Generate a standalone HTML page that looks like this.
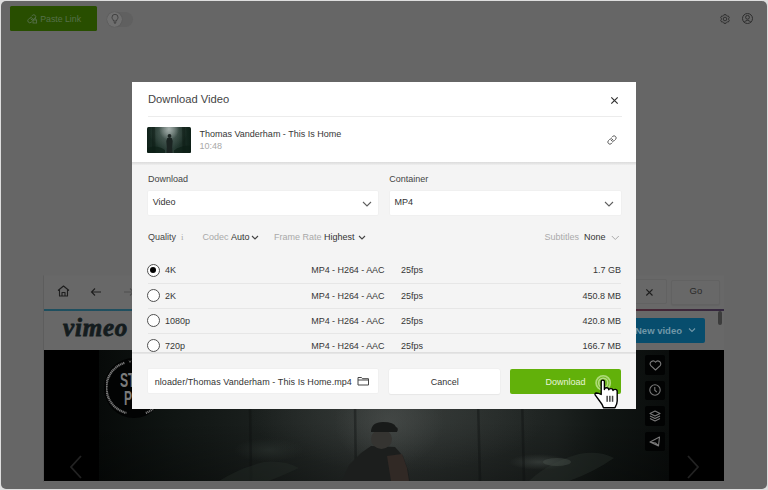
<!DOCTYPE html>
<html><head><meta charset="utf-8">
<style>
*{box-sizing:border-box;margin:0;padding:0}
html,body{width:768px;height:490px;overflow:hidden;background:#dedede;font-family:"Liberation Sans",sans-serif}
.a{position:absolute}
#win{position:absolute;left:1px;top:1px;width:766px;height:488px;border-radius:5px;background:#666;overflow:hidden}
/* top bar */
#paste{left:8.5px;top:5px;width:87.5px;height:25px;background:#284e00;border-radius:1.5px}
#paste span{position:absolute;left:30.7px;top:7.7px;font-size:8.75px;color:#56704a;white-space:nowrap}
#tog{left:106px;top:10.5px;width:25.5px;height:15px;border-radius:8px;background:#606060}
#knob{left:106px;top:10.5px;width:15px;height:15px;border-radius:50%;background:#6f6f6f;box-shadow:0 0 1px rgba(0,0,0,.3)}
/* browser panel */
#br{left:42px;top:273.5px;width:681px;height:207px;background:#686868;border-left:1px solid #5d5d5d;border-top:1px solid #676767}
#gline{left:43px;top:308.2px;width:680px;height:2.1px;background:linear-gradient(90deg,#1e4f5f 0%,#245060 40%,#482634 88%,#33283f 100%)}
#video{left:43px;top:349px;width:680px;height:131px;background:#000;overflow:hidden}
#photo{left:55px;top:0;width:570px;height:131px;background:
 radial-gradient(ellipse 55px 45px at 290px 72px,rgba(78,82,80,.55),rgba(0,0,0,0) 100%),
 radial-gradient(ellipse 150px 60px at 300px 62px,rgba(60,64,62,.6),rgba(0,0,0,0) 100%),
 radial-gradient(ellipse 30px 8px at 440px 112px,rgba(80,88,84,.45),rgba(0,0,0,0) 100%),
 radial-gradient(ellipse 35px 12px at 170px 100px,rgba(50,58,54,.45),rgba(0,0,0,0) 100%),
 linear-gradient(180deg,rgba(0,0,0,0) 55%,rgba(0,0,0,.3) 100%),
 linear-gradient(90deg,#070a09 0%,#0f1412 12%,#1a1f1d 28%,#262b29 42%,#2e3331 52%,#272c2a 65%,#1d2220 80%,#111614 88%,#0a0d0c 100%)}
#newvid{left:590px;top:317px;width:113.5px;height:24.5px;background:#074d6d;border-radius:2px}
#newvid span{position:absolute;left:44px;top:7px;font-size:9.5px;font-weight:bold;color:#7097a8;white-space:nowrap}
.ib{width:19.5px;height:19.5px;background:#020303;border-radius:2px}
/* dialog */
#dlg{left:131px;top:81px;width:504px;height:327px;background:#f4f4f4;overflow:hidden}
#hdr{left:0;top:0;width:504px;height:81px;background:#fff}
#hsep{left:0;top:79.5px;width:504px;height:3px;background:linear-gradient(#dcdcdc,#e4e4e4 50%,#efefef)}
.t{position:absolute;white-space:nowrap;font-size:9px;color:#363636;line-height:1}
.lbl{color:#444}
.sel{position:absolute;background:#fff;height:24px;border-radius:1px;box-shadow:0 0 0 .5px #ececec}
.row{position:absolute;left:15.5px;width:473px;height:25.2px}
.rsep{position:absolute;left:16px;width:473px;height:1px;background:#e6e6e6}
.rad{position:absolute;left:16px;width:13px;height:13px;border:1.1px solid #505050;border-radius:50%;background:#fff}
.rad.on::after{content:"";position:absolute;left:2.35px;top:2.35px;width:6.1px;height:6.1px;border-radius:50%;background:#000}
#listsh{left:0;top:269.8px;width:504px;height:2.2px;background:linear-gradient(#dcdcdc,#e8e8e8)}
.btn{position:absolute;height:25px;border-radius:2px}
</style></head><body>
<div id="win">
  <div id="paste" class="a">
    <svg class="a" style="left:17px;top:8px" width="11" height="10" viewBox="0 0 11 10"><g transform="translate(0,0) scale(0.4)"><path d="M10 13a5 5 0 0 0 7.54.54l3-3a5 5 0 0 0-7.07-7.07l-1.72 1.71" fill="none" stroke="#56704a" stroke-width="2.4" stroke-linecap="round"/><path d="M14 11a5 5 0 0 0-7.54-.54l-3 3a5 5 0 0 0 7.07 7.07l1.71-1.71" fill="none" stroke="#56704a" stroke-width="2.4" stroke-linecap="round"/></g><rect x="6" y="6" width="3.6" height="3" fill="none" stroke="#56704a" stroke-width="0.9"/><path d="M6.8 6 V5.2 A1 1 0 0 1 8.8 5.2 V6" fill="none" stroke="#56704a" stroke-width="0.8"/></svg>
    <span>Paste Link</span>
  </div>
  <div id="tog" class="a"></div>
  <div id="knob" class="a">
    <svg class="a" style="left:3.5px;top:2.5px" width="8" height="10" viewBox="0 0 8 10"><path d="M2.5 7 C2.5 5.6 1 5 1 3.3 A3 3 0 0 1 7 3.3 C7 5 5.5 5.6 5.5 7 Z" fill="none" stroke="#3c3c3c" stroke-width="0.9"/><path d="M2.7 8.3 H5.3 M3.2 9.3 H4.8" stroke="#3c3c3c" stroke-width="0.8"/></svg>
  </div>
  <!-- gear -->
  <svg class="a" style="left:718.3px;top:12.4px" width="12" height="12" viewBox="0 0 12 12"><g transform="translate(6 6) scale(0.9) translate(-6 -6)"><path d="M4.05 2.62 L4.56 2.05 L4.88 1.13 L7.12 1.13 L7.44 2.05 L7.95 2.62 L8.70 2.78 L9.66 2.59 L10.78 4.54 L10.14 5.27 L9.90 6.00 L10.14 6.73 L10.78 7.46 L9.66 9.41 L8.70 9.22 L7.95 9.38 L7.44 9.95 L7.12 10.87 L4.88 10.87 L4.56 9.95 L4.05 9.38 L3.30 9.22 L2.34 9.41 L1.22 7.46 L1.86 6.73 L2.10 6.00 L1.86 5.27 L1.22 4.54 L2.34 2.59 L3.30 2.78 Z" fill="none" stroke="#2e2e2e" stroke-width="1.05" stroke-linejoin="round"/><circle cx="6" cy="6" r="2" fill="none" stroke="#2e2e2e" stroke-width="1.05"/></g></svg>
  <!-- user -->
  <svg class="a" style="left:740px;top:11.4px" width="13" height="13" viewBox="0 0 13 13"><circle cx="6.5" cy="6.5" r="5" fill="none" stroke="#2e2e2e" stroke-width="1"/><circle cx="6.5" cy="5.3" r="1.9" fill="none" stroke="#2e2e2e" stroke-width="1"/><path d="M3.3 10.3 Q4.2 8.4 6.5 8.4 Q8.8 8.4 9.7 10.3" fill="none" stroke="#2e2e2e" stroke-width="1"/></svg>

  <!-- browser panel -->
  <div id="br" class="a"></div>
  <svg class="a" style="left:55.5px;top:284px" width="13" height="12" viewBox="0 0 13 12"><path d="M1 5.5 L6.5 1 L12 5.5 M2.5 4.5 V11 H10.5 V4.5 M5 11 V7.5 H8 V11" fill="none" stroke="#1e1e1e" stroke-width="1.1" stroke-linejoin="round"/></svg>
  <svg class="a" style="left:89px;top:285.5px" width="12" height="10" viewBox="0 0 12 10"><path d="M11 5 H1.5 M5 1.5 L1.5 5 L5 8.5" fill="none" stroke="#1e1e1e" stroke-width="1.1"/></svg>
  <svg class="a" style="left:122px;top:285.5px" width="12" height="10" viewBox="0 0 12 10"><path d="M1 5 H10.5 M7 1.5 L10.5 5 L7 8.5" fill="none" stroke="#4e4e4e" stroke-width="1.1"/></svg>
  <div class="a" style="left:560px;top:277.5px;width:106px;height:25px;border:1px solid #626262;border-radius:2px"></div>
  <svg class="a" style="left:644px;top:286.5px" width="9" height="9" viewBox="0 0 9 9"><path d="M1.3 1.3 L7.5 7.5 M7.5 1.3 L1.3 7.5" stroke="#1e1e1e" stroke-width="1.15"/></svg>
  <div class="a" style="left:670px;top:279px;width:49px;height:25px;border:1px solid #626262;border-radius:2px;box-shadow:0 1px 1px rgba(0,0,0,.05)"></div>
  <div class="t" style="left:688.5px;top:285.2px;font-size:9.5px;color:#2a2a2a">Go</div>
  <div id="gline" class="a"></div>
  <div class="a" style="left:717px;top:309.5px;width:4px;height:14.5px;border-radius:2px;background:#3c3c3c"></div>
  <div class="a" style="left:62px;top:314px;font-family:'Liberation Serif',serif;font-style:italic;font-weight:bold;font-size:25px;line-height:1;color:#141c1e;letter-spacing:0.8px;-webkit-text-stroke:0.8px #141c1e">vimeo</div>
  <div id="newvid" class="a"><span>New video</span>
    <svg class="a" style="left:97px;top:9px" width="8" height="6" viewBox="0 0 8 6"><path d="M1 1.5 L4 4.5 L7 1.5" fill="none" stroke="#7097a8" stroke-width="1.1"/></svg>
  </div>
  <div id="video" class="a">
    <div id="photo" class="a">
      <svg class="a" style="left:0;top:0" width="570" height="131" viewBox="0 0 570 131">
        <path d="M151 50 L152 131 M256 55 L257 131 M379 50 L381 131 M423 45 L425 131" stroke="rgba(12,16,14,.4)" stroke-width="2.5"/>
        <path d="M430 131 Q450 112 480 104 Q500 100 515 108 Q495 122 470 131 Z" fill="rgba(45,55,50,.35)"/>
        <ellipse cx="458" cy="112" rx="14" ry="4" fill="rgba(90,98,94,.3)"/>
        <path d="M120 131 Q140 118 165 112 Q185 110 200 118 Q185 125 170 131 Z" fill="rgba(40,48,44,.35)"/>
        <path d="M243 131 L250 115 L262 103 L272 96 L296 97 L304 106 L309 120 L311 131 Z" fill="#1c1e1d"/>
        <path d="M288 106 L303 104 L308 118 L310 131 L292 131 Z" fill="rgba(70,52,45,.5)"/>
        <ellipse cx="282.5" cy="89" rx="10.5" ry="10" fill="#353431"/>
        <path d="M272 82 Q272 72 284 72 Q295 72 297 77 Q300 78 298 82 Z" fill="#181a19"/>
      </svg>
    </div>
    <!-- badge -->
    <div class="a" style="left:59.5px;top:8px;width:60px;height:60px;border-radius:50%;background:#020303"></div>
    <svg class="a" style="left:62px;top:10px" width="60" height="60" viewBox="0 0 60 60"><path d="M18.3 2.9 A26 26 0 0 0 20.4 52.9" fill="none" stroke="#444" stroke-width="0.8"/><path d="M18.3 2.9 A26 26 0 0 0 20.4 52.9" fill="none" stroke="#7a7a7a" stroke-width="2.4" stroke-dasharray="1.1 0.7"/><path d="M39.8 52.9 A26 26 0 0 0 47 49" fill="none" stroke="#7a7a7a" stroke-width="2.4" stroke-dasharray="1.1 0.7"/><path d="M23 0.5 L24 2.5 L25 0.5" fill="none" stroke="#666" stroke-width="0.8"/></svg>
    <div class="a" style="left:75.5px;top:19.2px;font-size:21px;font-weight:bold;color:#7a7a7a;transform:scaleX(.58);transform-origin:0 0;line-height:1">ST</div>
    <div class="a" style="left:80px;top:37.5px;font-size:20px;font-weight:bold;color:#7a7a7a;transform:scaleX(.6);transform-origin:0 0;line-height:1">P</div>
    <svg class="a" style="left:25px;top:104px" width="14" height="26" viewBox="0 0 14 26"><path d="M12 2 L2 13 L12 24" fill="none" stroke="#222" stroke-width="1.8"/></svg>
    <svg class="a" style="left:642px;top:104px" width="14" height="26" viewBox="0 0 14 26"><path d="M2 2 L12 13 L2 24" fill="none" stroke="#222" stroke-width="1.8"/></svg>
    <div class="a ib" style="left:601px;top:5px"></div>
    <div class="a ib" style="left:601px;top:30.5px"></div>
    <div class="a ib" style="left:601px;top:56px"></div>
    <div class="a ib" style="left:601px;top:81.5px"></div>
    <svg class="a" style="left:604.5px;top:9.5px" width="13" height="11" viewBox="0 0 13 11"><path d="M6.5 10 L1.8 5.6 A2.6 2.6 0 0 1 6.5 2.2 A2.6 2.6 0 0 1 11.2 5.6 Z" fill="none" stroke="#7a7a7a" stroke-width="1.1" stroke-linejoin="round"/></svg>
    <svg class="a" style="left:605px;top:34px" width="12" height="12" viewBox="0 0 12 12"><circle cx="6" cy="6" r="5.2" fill="none" stroke="#7a7a7a" stroke-width="1.1"/><path d="M5.8 3 V6.2 L7.8 8.2" fill="none" stroke="#7a7a7a" stroke-width="1.1"/></svg>
    <svg class="a" style="left:605px;top:59.5px" width="12" height="12" viewBox="0 0 12 12"><path d="M6 1 L11 3.5 L6 6 L1 3.5 Z M1 6 L6 8.5 L11 6 M1 8.5 L6 11 L11 8.5" fill="none" stroke="#7a7a7a" stroke-width="1.1" stroke-linejoin="round"/></svg>
    <svg class="a" style="left:605px;top:85.5px" width="12" height="11" viewBox="0 0 12 11"><path d="M1 6 L10.5 1 L9.5 10 Z M1 6 L6.5 7 L9.5 10" fill="none" stroke="#7a7a7a" stroke-width="1.1" stroke-linejoin="round"/></svg>
  </div>

  <!-- dialog -->
  <div id="dlg" class="a">
    <div id="hdr" class="a"></div>
    <div class="t" style="left:16px;top:12px;font-size:11.2px;color:#444">Download Video</div>
    <svg class="a" style="left:478px;top:13.8px" width="9" height="9" viewBox="0 0 9 9"><path d="M1.3 1.3 L7.7 7.7 M7.7 1.3 L1.3 7.7" stroke="#333" stroke-width="1.2"/></svg>
    <div class="a" style="left:16px;top:33.5px;width:474px;height:1px;background:#ececec"></div>
    <div class="a" style="left:15px;top:45px;width:44px;height:25.5px;border-radius:1.5px;overflow:hidden;background:
 radial-gradient(ellipse 10px 11px at 22px 2px,rgba(180,190,187,.85),rgba(0,0,0,0) 100%),
 radial-gradient(ellipse 19px 17px at 21px 5px,rgba(105,120,115,.75),rgba(0,0,0,0) 100%),
 linear-gradient(90deg,#0f2119,#22372f 28%,#30433d 50%,#21352d 72%,#0d1f17)">
      <svg class="a" style="left:0;top:0" width="44" height="26" viewBox="0 0 44 26"><path d="M5 0 L8 0 L8.5 26 L5 26 Z M35 0 L38 0 L38.5 26 L35.5 26 Z" fill="rgba(10,25,18,.45)"/><path d="M19.5 26 L19.8 20 L19.3 14 L20.3 11 L24.7 11 L25.7 14 L25.2 20 L25.5 26 Z" fill="#1b2422"/><circle cx="22.5" cy="9" r="1.9" fill="#1b2422"/><path d="M0 21 Q10 17 18 23 L18 26 L0 26 Z M44 19 Q34 18 27 23.5 L27 26 L44 26 Z" fill="rgba(12,30,22,.7)"/></svg>
    </div>
    <div class="t" style="left:67.5px;top:48px">Thomas Vanderham - This Is Home</div>
    <div class="t" style="left:67.5px;top:60px;color:#a8a8a8">10:48</div>
    <svg class="a" style="left:474.7px;top:52.7px" width="10" height="10" viewBox="0 0 24 24"><path d="M10 13a5 5 0 0 0 7.54.54l3-3a5 5 0 0 0-7.07-7.07l-1.72 1.71" fill="none" stroke="#555" stroke-width="2.3" stroke-linecap="round"/><path d="M14 11a5 5 0 0 0-7.54-.54l-3 3a5 5 0 0 0 7.07 7.07l1.71-1.71" fill="none" stroke="#555" stroke-width="2.3" stroke-linecap="round"/></svg>
    <div id="hsep" class="a"></div>

    <div class="t lbl" style="left:16px;top:93px">Download</div>
    <div class="sel" style="left:15.7px;top:109px;width:230.8px"></div>
    <div class="t" style="left:20.7px;top:116.3px;color:#333">Video</div>
    <svg class="a" style="left:229.5px;top:118.5px" width="10" height="7" viewBox="0 0 10 7"><path d="M1 1 L5 5 L9 1" fill="none" stroke="#606060" stroke-width="1.1"/></svg>
    <div class="t lbl" style="left:257.3px;top:93px">Container</div>
    <div class="sel" style="left:257.5px;top:109px;width:231px"></div>
    <div class="t" style="left:262.5px;top:116.3px;color:#333">MP4</div>
    <svg class="a" style="left:471.5px;top:118.5px" width="10" height="7" viewBox="0 0 10 7"><path d="M1 1 L5 5 L9 1" fill="none" stroke="#606060" stroke-width="1.1"/></svg>

    <div class="t" style="left:16px;top:151px;color:#444">Quality</div>
    <div class="t" style="left:49px;top:151px;color:#aaa;font-family:'Liberation Serif',serif">i</div>
    <div class="t" style="left:70.5px;top:151px;color:#a9a9a9">Codec</div>
    <div class="t" style="left:99px;top:151px;color:#333">Auto</div>
    <svg class="a" style="left:118.7px;top:153px" width="9" height="6" viewBox="0 0 9 6"><path d="M1 1 L4 4 L7 1" fill="none" stroke="#444" stroke-width="1.1"/></svg>
    <div class="t" style="left:142px;top:151px;color:#a9a9a9">Frame Rate</div>
    <div class="t" style="left:192px;top:151px;color:#333">Highest</div>
    <svg class="a" style="left:225.5px;top:153px" width="9" height="6" viewBox="0 0 9 6"><path d="M1 1 L4 4 L7 1" fill="none" stroke="#444" stroke-width="1.1"/></svg>
    <div class="t" style="left:412.5px;top:151px;color:#aaa">Subtitles</div>
    <div class="t" style="left:452px;top:151px;color:#333">None</div>
    <svg class="a" style="left:478.5px;top:152.5px" width="9" height="6" viewBox="0 0 9 6"><path d="M0.8 1 L4.3 4.5 L7.8 1" fill="none" stroke="#aaa" stroke-width="1"/></svg>

    <!-- rows -->
    <div class="rad on" style="left:15px;top:182px"></div>
    <div class="t" style="left:33px;top:184px">4K</div>
    <div class="t" style="left:179.3px;top:184px;letter-spacing:-0.05px">MP4 - H264 - AAC</div>
    <div class="t" style="left:269px;top:184px">25fps</div>
    <div class="t" style="right:15px;top:184px">1.7 GB</div>
    <div class="rsep" style="top:200.8px"></div>
    <div class="rad" style="left:15px;top:207.1px"></div>
    <div class="t" style="left:33px;top:209.8px">2K</div>
    <div class="t" style="left:179.3px;top:209.8px;letter-spacing:-0.05px">MP4 - H264 - AAC</div>
    <div class="t" style="left:269px;top:209.8px">25fps</div>
    <div class="t" style="right:15px;top:209.8px">450.8 MB</div>
    <div class="rsep" style="top:225.9px"></div>
    <div class="rad" style="left:15px;top:232.3px"></div>
    <div class="t" style="left:33px;top:234.7px">1080p</div>
    <div class="t" style="left:179.3px;top:234.7px;letter-spacing:-0.05px">MP4 - H264 - AAC</div>
    <div class="t" style="left:269px;top:234.7px">25fps</div>
    <div class="t" style="right:15px;top:234.7px">420.8 MB</div>
    <div class="rsep" style="top:250.9px"></div>
    <div class="rad" style="left:15px;top:257.3px"></div>
    <div class="t" style="left:33px;top:259.7px">720p</div>
    <div class="t" style="left:179.3px;top:259.7px;letter-spacing:-0.05px">MP4 - H264 - AAC</div>
    <div class="t" style="left:269px;top:259.7px">25fps</div>
    <div class="t" style="right:15px;top:259.7px">166.7 MB</div>
<div id="listsh" class="a"></div>
    <div class="a" style="left:0;top:272px;width:504px;height:55px;background:#f4f4f4"></div>

    <!-- footer -->
    <div class="sel" style="left:15.5px;top:286.5px;width:230.5px;height:24.5px"></div>
    <div class="t" style="left:22.7px;top:296px;color:#333;letter-spacing:0.07px">nloader/Thomas Vanderham - This Is Home.mp4</div>
    <svg class="a" style="left:225px;top:294px" width="13" height="10" viewBox="0 0 13 10"><path d="M1 1.5 H4.5 L5.5 2.7 H11.5 V9 H1 Z M1 4 H11.5" fill="none" stroke="#444" stroke-width="1"/></svg>
    <div class="btn" style="left:257px;top:287px;width:110.5px;background:#fff;box-shadow:0 0 0 .5px #ececec,0 1px 1px rgba(0,0,0,.07)"></div>
    <div class="t" style="left:298.8px;top:295.6px;color:#333">Cancel</div>
    <div class="btn" style="left:377.5px;top:287px;width:111px;background:#62b10a"></div>
    <div class="t" style="left:413.5px;top:296px;color:#e8f4dc">Download</div>
  </div>

  <!-- cursor -->
  <svg class="a" style="left:589px;top:371px" width="32" height="40" viewBox="0 0 32 40">
    <circle cx="13.2" cy="10.9" r="8" fill="rgba(255,255,255,0.12)"/>
    <circle cx="13.2" cy="10.9" r="7.1" fill="none" stroke="rgba(220,245,190,0.55)" stroke-width="1.6"/>
    <circle cx="13.2" cy="10.9" r="4.6" fill="none" stroke="rgba(220,245,190,0.6)" stroke-width="1.5"/>
    <path d="M11.2 22.5 V9.7 A1.6 1.6 0 0 1 14.4 9.7 V17.5 Q14.4 15.8 16.6 15.8 Q18.8 15.8 18.8 17.8 Q18.8 16.6 20.9 16.6 Q23 16.6 23 18.6 Q23 17.4 25.1 17.4 Q27.2 17.4 27.2 19.4 V29 Q27.2 32 25 35.7 H13.5 Q12.5 32.5 10 29.5 L5.3 23.2 Q4.2 21.2 6.5 21 Q8.5 21 11.2 22.5 Z" fill="#fff" stroke="#000" stroke-width="1.4" stroke-linejoin="round"/>
    <rect x="16.4" y="23.8" width="1.5" height="6" fill="#444"/>
    <rect x="19.1" y="23.8" width="1.5" height="6" fill="#444"/>
    <rect x="21.8" y="23.8" width="1.5" height="6" fill="#444"/>
  </svg>
</div>
</body></html>
